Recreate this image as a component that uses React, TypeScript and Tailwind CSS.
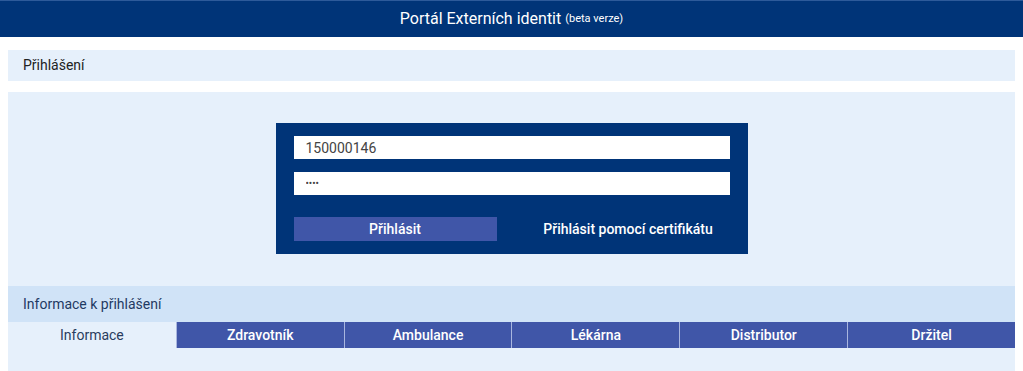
import { useState } from "react";

const tabs = ["Informace", "Zdravotník", "Ambulance", "Lékárna", "Distributor", "Držitel"];

export default function App() {
  const [login, setLogin] = useState("150000146");
  const [password, setPassword] = useState("••••");
  const active = 0;

  return (
    <div className="min-h-[371px] bg-white font-['Roboto',sans-serif]">
      <header className="flex h-[37px] items-center justify-center border-t border-[#2d5a9a] bg-[#003478] text-[16px] text-white">
        Portál Externích identit
        <span className="ml-[4px] text-[11px]">(beta verze)</span>
      </header>

      <div className="px-2 pt-[13px]">
        <div className="flex h-[31px] items-center bg-[#e6f0fb] pl-[15px] text-[14px] text-[#222]">
          Přihlášení
        </div>

        <div className="mt-[11px] bg-[#e6f0fb] pt-[31px]">
          {/* login box */}
          <div className="mx-auto w-[472px] bg-[#003478] px-[18px] pb-[13px] pt-[13px]">
            <input
              value={login}
              onChange={(e) => setLogin(e.target.value)}
              className="block h-[23px] w-full bg-white px-[12px] text-[14px] text-[#444] outline-none"
            />
            <input
              value={password}
              onChange={(e) => setPassword(e.target.value)}
              className="mt-[13px] block h-[23px] w-full bg-white px-[12px] text-[10px] text-[#444] outline-none"
            />
            <div className="mt-[22px] flex items-center">
              <button className="h-[24px] w-[203px] bg-[#4056a8] text-[14px] font-medium text-white">
                Přihlásit
              </button>
              <button className="flex-1 pl-[30px] text-center text-[14px] font-medium text-white">
                Přihlásit pomocí certifikátu
              </button>
            </div>
          </div>

          <div className="mt-[32px] flex h-[36px] items-center bg-[#d0e3f7] pl-[15px] text-[14px] text-[#1f3a63]">
            Informace k přihlášení
          </div>

          <div className="grid h-[26px] grid-cols-6">
            {tabs.map((t, i) => (
              <div
                key={t}
                className={
                  i === active
                    ? "flex items-center justify-center text-[14px] text-[#2a3d5e]"
                    : "flex items-center justify-center border-l border-[#a9b6df] bg-[#4056a8] text-[14px] font-medium text-white"
                }
              >
                {t}
              </div>
            ))}
          </div>

          <div className="h-[23px]" />
        </div>
      </div>
    </div>
  );
}
